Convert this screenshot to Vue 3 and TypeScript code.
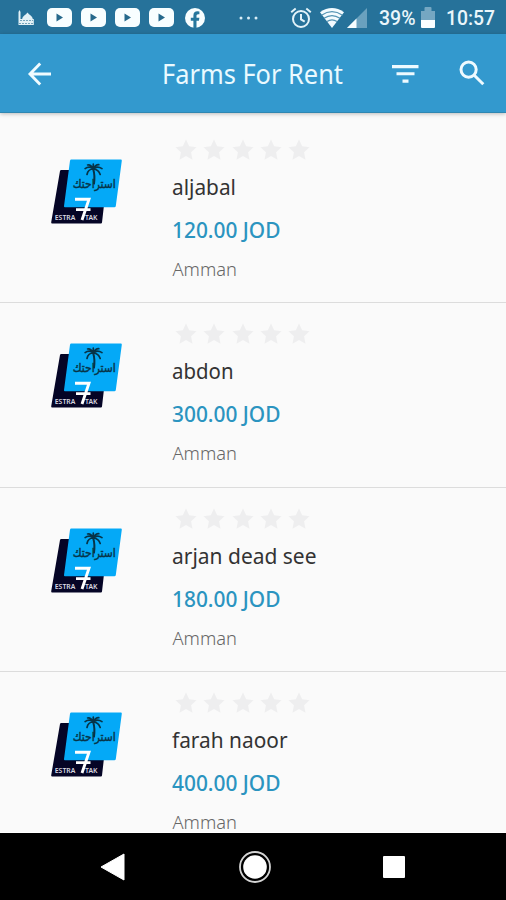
<script setup lang="ts">
interface Farm {
  name: string
  width: number
  price: string
  city: string
}

const farms: Farm[] = [
  { name: 'aljabal', width: 64, price: '120.00 JOD', city: 'Amman' },
  { name: 'abdon', width: 61.5, price: '300.00 JOD', city: 'Amman' },
  { name: 'arjan dead see', width: 144.5, price: '180.00 JOD', city: 'Amman' },
  { name: 'farah naoor', width: 115.5, price: '400.00 JOD', city: 'Amman' },
]
</script>

<template>
  <div class="screen">
    <div class="status">
      <svg class="mosque" viewBox="0 0 18 18" width="18" height="18">
        <path d="M1.5 16V3l1-2 1 2v7h1.7c.3-3 3.7-4 5.3-6.5 1.6 2.500 5 3.500 5.300 6.500h1v6z" fill="#e3f1f6" />
        <path d="M3 11.500h13M2 14.500h14" stroke="#75a5bd" stroke-width="1" stroke-dasharray="2 1" />
      </svg>
      <svg v-for="n in 4" :key="n" class="video" viewBox="0 0 25 19" width="25" height="19">
        <rect width="25" height="19" rx="5" fill="#f8feff" />
        <path d="M9.5 5.6v7.800l6.500-3.900z" fill="#26698c" />
      </svg>
      <svg class="facebook" viewBox="0 0 20 20" width="20" height="20">
        <circle cx="10" cy="10" r="10" fill="#f8feff" />
        <path d="M8.4 20v-7.2H5.8V9.7h2.6V7.5c0-2.8 1.6-4.2 4-4.2l2 .2v2.7h-1.2c-1.3 0-1.7.8-1.7 1.6v1.9h2.9l-.5 3.1h-2.4V20z" fill="#26779d" />
      </svg>
      <svg class="more" viewBox="0 0 20 4" width="20" height="4" fill="#d9eef7">
        <circle cx="2" cy="2" r="1.5" /><circle cx="9.5" cy="2" r="1.5" /><circle cx="17" cy="2" r="1.5" />
      </svg>
      <svg class="alarm" viewBox="0 0 22 22" width="22" height="22" fill="none" stroke="#e3f3f9" stroke-width="2">
        <circle cx="11" cy="12" r="8" />
        <path d="M1.2 5.2 5.7 1.5M20.8 5.2l-4.5-3.7M11 7v5.4l3.7 2.3" />
      </svg>
      <svg class="wifi" viewBox="0 0 24 20" width="24" height="20">
        <path d="M0 4.2Q12-4 24 4.2L12 20z" fill="#f3fbff" />
        <path d="M1.5 7.2q10.5-7 21 0M4 10.3q8-5.3 16 0M7 13.6q5-3.6 10 0" fill="none" stroke="#5393b3" stroke-width="1.2" />
      </svg>
      <svg class="signal" viewBox="0 0 20 20" width="20" height="20">
        <path d="M0 20 20 0v20z" fill="#6aa1be" />
        <path d="M0 20 9.5 10.5V20z" fill="#f6fdff" />
      </svg>
      <svg class="percent" viewBox="0 0 38 24" width="38" height="24">
        <text x="0" y="19" textLength="36.5" lengthAdjust="spacingAndGlyphs">39%</text>
      </svg>
      <svg class="battery" viewBox="0 0 14 21" width="14" height="21">
        <path d="M0 4h3.500V1q0-1 1-1h5q1 0 1 1v3H14v9H0z" fill="#75a7c2" />
        <path d="M0 13h14v7q0 1-1 1H1q-1 0-1-1z" fill="#fbfeff" />
      </svg>
      <svg class="clock" viewBox="0 0 50 24" width="50" height="24">
        <text x="0" y="19" textLength="49" lengthAdjust="spacingAndGlyphs">10:57</text>
      </svg>
    </div>

    <header class="bar">
      <svg class="back" viewBox="0 0 24 24" width="24" height="24" fill="none" stroke="#f0fbff" stroke-width="2.900">
        <path d="M13.2 1.5 3 12l10.200 10.500M3.2 12H24" />
      </svg>
      <svg class="title" viewBox="0 0 190 54" width="190" height="54">
        <text x="0" y="38" textLength="181" lengthAdjust="spacingAndGlyphs">Farms For Rent</text>
      </svg>
      <svg class="filter" viewBox="0 0 28 19" width="28" height="19" fill="#eefaff">
        <path d="M0 0h26.500v3.200H0zM4.5 7.300h18v3H4.500zM10.500 14.500h6v3.200h-6z" />
      </svg>
      <svg class="search" viewBox="0 0 26 26" width="26" height="26" fill="none" stroke="#eefaff" stroke-width="3">
        <circle cx="9.6" cy="9.6" r="7.6" /><path d="m15 15 9.3 9.3" />
      </svg>
    </header>

    <main class="list">
      <article v-for="farm in farms" :key="farm.name" class="farm">
        <svg class="logo" viewBox="50 158 74 67" width="74" height="67">
          <path d="M60 171q.2-1 1.2-1H108l-6 52.4q-.1 1-1.1 1H52.2q-1.2 0-1-1.2z" fill="#050526" />
          <path d="M71.3 159.5H120.8q1.2 0 1 1.2l-6 45.4q-.2 1.2-1.4 1.2H65q-1.2 0-1-1.2l6-45.4q.2-1.2 1.3-1.2z" fill="#04a9f7" />
          <g fill="none" stroke="#073347" stroke-linecap="round" stroke-linejoin="round">
            <path d="M93.3 169.5q1.800 6 .7 14" stroke-width="2" />
            <path d="M93.2 168.8q-4-3.2-8.1-.2M93.2 168.8q4-3.4 8.8-.2M93.2 169q-2-4.5-5.6-4M93.5 169q1.5-4.3 5.3-4.3M93 169q-5 .2-6 5.5M93.5 169q5 .5 6.7 5.5M93.3 169v-4.8" stroke-width="1.7" />
          </g>
          <text class="arabic" x="94.3" y="188.3" text-anchor="middle" textLength="43" lengthAdjust="spacingAndGlyphs" direction="rtl">استراحتك</text>
          <path d="M75 199.200h14L82 220M76 209.600h14.500" fill="none" stroke="#fff" stroke-width="2.900" />
          <text class="latin" x="54.8" y="219.7" textLength="20.5" lengthAdjust="spacingAndGlyphs">ESTRA</text>
          <text class="latin" x="85" y="219.7" textLength="12.500" lengthAdjust="spacingAndGlyphs">TAK</text>
        </svg>
        <div class="details">
          <div class="stars">
            <svg v-for="n in 5" :key="n" viewBox="0 0 24 24" width="24" height="24">
              <path d="m12 1.5 3.2 6.8 7.3.9-5.4 5.1 1.4 7.4-6.5-3.6-6.5 3.6 1.4-7.4-5.4-5.1 7.3-.9z" fill="#eeeeef" />
            </svg>
          </div>
          <svg class="name" viewBox="0 0 300 36" width="300" height="36">
            <text x="0" y="25" :textLength="farm.width" lengthAdjust="spacingAndGlyphs">{{ farm.name }}</text>
          </svg>
          <svg class="price" viewBox="0 0 300 43" width="300" height="43">
            <text x="0" y="32.4" textLength="108.5" lengthAdjust="spacingAndGlyphs">{{ farm.price }}</text>
          </svg>
          <svg class="city" viewBox="0 0 300 36" width="300" height="36">
            <text x="0.5" y="27.3" textLength="64.5" lengthAdjust="spacingAndGlyphs">{{ farm.city }}</text>
          </svg>
        </div>
      </article>
    </main>

    <nav class="nav">
      <svg viewBox="0 0 26 30" width="26" height="30">
        <path d="M1 15 24 2v26z" fill="#fff" stroke="#fff" stroke-linejoin="round" />
      </svg>
      <svg viewBox="0 0 34 34" width="34" height="34">
        <circle cx="17" cy="17" r="15" fill="none" stroke="#d5d5d5" stroke-width="1.8" />
        <circle cx="17" cy="17" r="11.8" fill="#fff" />
      </svg>
      <svg viewBox="0 0 22 22" width="22" height="22"><rect width="22" height="22" rx="1" fill="#fff" /></svg>
    </nav>
  </div>
</template>

<style>
body {
  margin: 0;
}
</style>

<style scoped>
.screen {
  width: 506px;
  height: 900px;
  display: flex;
  flex-direction: column;
  overflow: hidden;
  background: #fafafa;
  font-family: "Noto Sans", "Open Sans", sans-serif;
}
svg {
  display: block;
  flex: none;
}
.status {
  height: 34px;
  flex: none;
  display: flex;
  align-items: center;
  background: #26729a;
  box-sizing: border-box;
  padding: 1px 0 0 17px;
}
.video {
  margin-left: 9px;
}
.mosque + .video {
  margin-left: 12px;
}
.facebook {
  margin-left: 11px;
}
.more {
  margin-left: 34px;
}
.alarm {
  margin-left: 31px;
}
.wifi {
  margin-left: 8px;
}
.signal {
  margin-left: 3px;
}
.percent {
  margin-left: 12px;
}
.battery {
  margin-left: 4px;
}
.clock {
  margin-left: 11px;
}
.percent text,
.clock text {
  font: 500 20px Roboto, sans-serif;
  fill: #eaf6fb;
}
.bar {
  height: 79px;
  flex: none;
  display: flex;
  align-items: center;
  box-sizing: border-box;
  padding-left: 27px;
  background: #3399ce;
  border-bottom: 1px solid #2f87b2;
  box-shadow: 0 1px 4px rgba(0, 0, 0, 0.25);
  z-index: 1;
}
.back {
  margin-top: 2px;
}
.title {
  margin-left: 111px;
}
.title text {
  font-size: 27.5px;
  fill: #eafaff;
}
.filter {
  margin: 3px 0 0 40px;
}
.search {
  margin-left: 39px;
}
.list {
  flex: 1;
  min-height: 0;
  padding-top: 6.3px;
  overflow: hidden;
  border-bottom: 1px solid #fff;
}
.farm {
  height: 184.15px;
  box-sizing: border-box;
  display: flex;
  border-bottom: 1.5px solid #dcdcdc;
}
.logo {
  margin: 39px 0 0 50px;
}
.arabic {
  font-family: "DejaVu Sans", sans-serif;
  font-size: 12px;
  fill: #073347;
  stroke: #073347;
  stroke-width: 0.4px;
}
.latin {
  font-size: 6.5px;
  font-weight: 600;
  fill: #d9d9e2;
}
.details {
  margin: 19px 0 0 48px;
}
.stars {
  display: flex;
  gap: 4.3px;
  height: 32px;
  margin-left: 2px;
}
.name text {
  font-size: 22.5px;
  font-weight: 400;
  fill: #333;
}
.price text {
  font-size: 22.5px;
  font-weight: 500;
  fill: #2b94c0;
}
.city text {
  font-size: 19px;
  font-weight: 300;
  fill: #666;
}
.nav {
  height: 67px;
  flex: none;
  display: flex;
  align-items: center;
  justify-content: space-between;
  box-sizing: border-box;
  padding: 0 101px 0 100px;
  background: #000;
}
</style>
